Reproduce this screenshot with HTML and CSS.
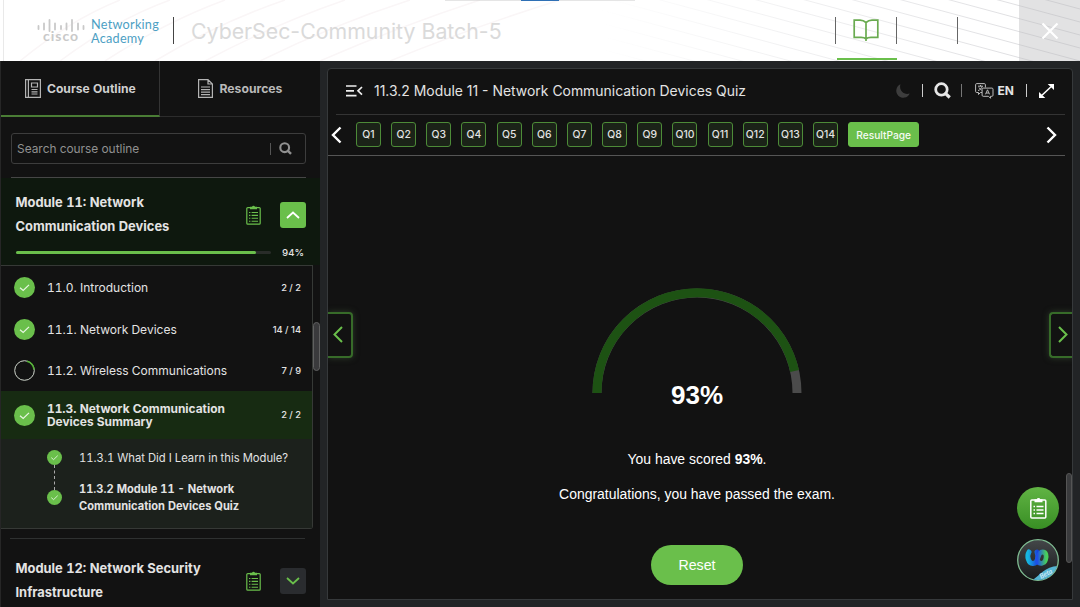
FILE: index.html
```html
<!DOCTYPE html>
<html lang="en">
<head>
<meta charset="UTF-8"><meta name="viewport" content="width=device-width, initial-scale=1">
<title>CyberSec-Community Batch-5</title>
<link rel="stylesheet" href="styles.css">
</head>
<body>
  <!-- shared icons -->
  <svg class="defs" width="0" height="0">
    <symbol id="check" viewBox="0 0 21 21"><circle cx="10.5" cy="10.5" r="10.5" fill="#6abf4b"/><path d="M6 10.7l3.2 2.8 5.8-5.6" fill="none" stroke="#e9f7e3" stroke-width="1.2"/></symbol>
    <symbol id="clip" viewBox="0 0 15 20"><rect x=".8" y="2.6" width="13.4" height="16.6" rx="1" fill="none" stroke="currentColor" stroke-width="1.2"/><path d="M4 1.8h2a1.6 1.6 0 0 1 3 0h2v2.4H4z" fill="currentColor"/><path d="M3 7.5h1.4M5.6 7.5H12M3 10.4h1.4M5.6 10.4H12M3 13.3h1.4M5.6 13.3H12M3 16.2h1.4M5.6 16.2H12" stroke="currentColor" stroke-width="1.1"/></symbol>
    <symbol id="search" viewBox="0 0 16 16"><circle cx="7" cy="7" r="5.4" fill="none" stroke="currentColor" stroke-width="2.6"/><path d="M10 10l4.8 4.6" stroke="currentColor" stroke-width="3"/></symbol>
  </svg>

  <header class="topbar">
    <svg class="waves" width="1080" height="61" fill="none">
      <defs>
        <linearGradient id="fade" gradientUnits="userSpaceOnUse" x1="600" y1="0" x2="1060" y2="0"><stop offset="0" stop-color="#fff"/><stop offset="1" stop-color="#dcdcdf"/></linearGradient>
      </defs>
      <path d="M20 61Q70 20 120 0M60 61Q115 20 170 0M105 61Q165 22 225 0M155 61Q220 22 285 0M205 61Q275 24 345 0M260 61Q335 24 410 0M320 61Q400 26 480 0M390 61Q470 28 560 0" stroke="#faf6f7" stroke-width="1.5"/>
      <path d="M560 -118l520 140M560 -105l520 140M560 -92l520 140M560 -79l520 140M560 -66l520 140M560 -53l520 140M560 -40l520 140M560 -27l520 140M560 -14l520 140M560 -1l520 140M560 12l520 140M560 25l520 140M560 38l520 140M560 -131l520 140" stroke="url(#fade)"/>
      <path d="M3.500 0V61" stroke="#e9e9e9"/>
      <path d="M445 0h190" stroke="#ccc"/>
      <path d="M521 0h38" stroke="#2f70b5" stroke-width="2"/>
    </svg>
    <div class="brand">
      <div class="cisco">
        <svg width="48" height="13" viewBox="0 0 48 13"><path d="M1.500 7v3M7 4.500v6M12.500 1v11M18 4.500v6M24 7v3M29.500 4.500v6M35 1v11M41 4.500v6M46.500 7v3" stroke="#c9c9c9" stroke-width="1.800" stroke-linecap="round"/></svg>
        <span>cisco</span>
      </div>
      <div class="netacad"><span>Networking</span><span>Academy</span></div>
    </div>
    <h1 class="course">CyberSec-Community Batch-5</h1>
    <nav class="topnav">
      <a class="navitem active"><svg width="26" height="23" viewBox="0 0 26 23" fill="none" stroke="#6aab50" stroke-width="1.700"><path d="M13 3.500C11 1.700 9 1.200 7 1.200H1.200v17.200H8c2 0 4 .5 5 1.600 1-1.100 3-1.600 5-1.600h6.800V1.200H19c-2 0-4 .5-6 2.300zM13 3.500V22"/></svg></a>
      <a class="navitem"></a>
      <a class="navitem last"></a>
      <a class="close"><svg width="18" height="18" viewBox="0 0 18 18"><path d="M1.500 1.500l15 15M16.500 1.500l-15 15" stroke="#fff" stroke-width="2.200"/></svg></a>
    </nav>
  </header>

  <div class="layout">
    <aside class="sidebar">
      <div class="tabs">
        <div class="tab selected"><svg width="16" height="19" viewBox="0 0 16 19" fill="none" stroke="#b4b4b4" stroke-width="1.200"><path d="M.6.6h14.800v17.800H.6zM3.400.6v17.800M6.500 4h6v4h-6zM6.500 10.500h6M6.500 12.800h6M6.500 15h6"/></svg><span>Course Outline</span></div>
        <div class="tab"><svg width="15" height="19" viewBox="0 0 15 19" fill="none" stroke="#b4b4b4" stroke-width="1.200"><path d="M.6.6h9.400l4.400 4.400v13.400H.6zM10 .6V5h4.400M3 8h9M3 10.600h9M3 13.200h9M3 15.600h9"/></svg><span>Resources</span></div>
      </div>

      <div class="searchbox"><span>Search course outline</span><i></i><svg width="13" height="13"><use href="#search"/></svg></div>

      <section class="module current">
        <div class="modhead">
          <h2>Module 11: Network<br>Communication Devices</h2>
          <svg class="clip" width="15" height="20"><use href="#clip"/></svg>
          <button class="toggle open"><svg width="14" height="8" viewBox="0 0 14 8"><path d="M1 7l6-5.500L13 7" fill="none" stroke="#fff" stroke-width="1.800"/></svg></button>
        </div>
        <div class="progress"><div class="track"><div class="bar" style="width:94%"></div></div><b>94%</b></div>
      </section>

      <div class="lessons">
        <div class="lesson"><svg width="21" height="21"><use href="#check"/></svg><span>11.0. Introduction</span><em>2 / 2</em></div>
        <div class="lesson"><svg width="21" height="21"><use href="#check"/></svg><span>11.1. Network Devices</span><em>14 / 14</em></div>
        <div class="lesson"><svg width="21" height="21" viewBox="0 0 21 21" fill="none"><circle cx="10.500" cy="10.500" r="9.800" stroke="#cfd6cc"/><path d="M13 1.200a9.600 9.600 0 0 1 7 8.300" stroke="#54b435" stroke-width="1.600"/></svg><span>11.2. Wireless Communications</span><em>7 / 9</em></div>
        <div class="lesson chosen"><svg width="21" height="21"><use href="#check"/></svg><span>11.3. Network Communication<br>Devices Summary</span><em>2 / 2</em></div>
        <div class="topics">
          <div class="steps"><svg width="15" height="15"><use href="#check"/></svg><i></i><svg width="15" height="15"><use href="#check"/></svg></div>
          <div class="topictext">
            <p>11.3.1 What Did I Learn in this Module?</p>
            <p class="now">11.3.2 Module 11 - Network<br>Communication Devices Quiz</p>
          </div>
        </div>
      </div>

      <section class="module next">
        <div class="modhead">
          <h2>Module 12: Network Security<br>Infrastructure</h2>
          <svg class="clip" width="15" height="20"><use href="#clip"/></svg>
          <button class="toggle"><svg width="14" height="8" viewBox="0 0 14 8"><path d="M1 1l6 5.500L13 1" fill="none" stroke="#6abf4b" stroke-width="1.800"/></svg></button>
        </div>
      </section>
      <div class="thumb"></div>
    </aside>

    <main class="panel">
      <div class="titlebar">
        <svg width="17" height="12" viewBox="0 0 17 12"><path d="M0 1h10.500M0 5.800h8M0 10.600h10.500M16 2l-4 3.800 4 3.800" fill="none" stroke="#eee" stroke-width="1.700"/></svg>
        <h3>11.3.2 Module 11 - Network Communication Devices Quiz</h3>
        <div class="tools">
          <svg class="moon" width="14" height="14" viewBox="0 0 14 14"><path d="M4.500.3A7 7 0 1 0 13.700 9.500C8 11.500 2.500 6.500 4.500.3z" fill="#3d3d3d"/></svg>
          <i></i>
          <svg class="find" width="17" height="17"><use href="#search"/></svg>
          <i class="dim"></i>
          <svg class="lang" width="19" height="16" viewBox="0 0 19 16" fill="none" stroke="#bbb"><path d="M7 9.500H5.500L3.500 11.500V9.500H1.700Q.6 9.500.6 8.400V1.700Q.6.6 1.700.6h7.600q1.100 0 1.100 1.100V4.500M3 3.200h5M5.500 2v1.200M7.200 3.200C6.500 5.500 5 7 3 7.600M4 4.500c.6 1.200 1.500 2 2.600 2.600"/><path d="M8.200 5.100h8.700q1.100 0 1.100 1.100v6q0 1.100-1.100 1.100H15.500v2l-2-2H8.200q-1.100 0-1.100-1.100v-6q0-1.100 1.100-1.100zM10.500 11.300l2-4.500 2 4.500M11.200 10h2.600"/></svg>
          <b>EN</b>
          <i></i>
          <svg class="expand" width="15" height="14" viewBox="0 0 15 14"><path d="M3 11.200L12 2.800" stroke="#fff" stroke-width="1.500"/><path d="M8.700 0H15v6zM0 14V8l6.300 6z" fill="#fff"/></svg>
        </div>
      </div>

      <div class="questions">
        <svg class="prev" width="11" height="18" viewBox="0 0 11 18"><path d="M9.500 1.500L2 9l7.500 7.500" fill="none" stroke="#fff" stroke-width="2.400"/></svg>
        <div class="qlist">
          <a>Q1</a><a>Q2</a><a>Q3</a><a>Q4</a><a>Q5</a><a>Q6</a><a>Q7</a><a>Q8</a><a>Q9</a><a>Q10</a><a>Q11</a><a>Q12</a><a>Q13</a><a>Q14</a><a class="result">ResultPage</a>
        </div>
        <svg class="fwd" width="11" height="18" viewBox="0 0 11 18"><path d="M1.500 1.500L9 9l-7.500 7.500" fill="none" stroke="#fff" stroke-width="2.400"/></svg>
      </div>

      <div class="score">
        <svg width="210" height="106" viewBox="0 0 210 106" fill="none" stroke-width="9"><path d="M5 105a100 100 0 0 1 200 0" stroke="#4b4b4b"/><path d="M5 105a100 100 0 0 1 197.600-21.900" stroke="#1d5213"/></svg>
        <div class="pct">93%</div>
        <p class="line1">You have scored <b>93%</b>.</p>
        <p class="line2">Congratulations, you have passed the exam.</p>
        <button class="reset">Reset</button>
      </div>

      <div class="side left"><svg width="10" height="17" viewBox="0 0 10 17"><path d="M9 1L1.500 8.500 9 16" fill="none" stroke="#6abf4b" stroke-width="2"/></svg></div>
      <div class="side right"><svg width="10" height="17" viewBox="0 0 10 17"><path d="M1 1l7.500 7.500L1 16" fill="none" stroke="#6abf4b" stroke-width="2"/></svg></div>
      <div class="fab notes"><svg width="17" height="22" viewBox="0 0 17 22" fill="none" stroke="#fff"><rect x=".8" y="3" width="15" height="18" rx="1" stroke-width="1.500"/><path d="M4.500 2.200h2.200a1.900 1.900 0 0 1 3.600 0h2.200v3h-8z" fill="#fff" stroke="none"/><path d="M3.500 9.500H5M6.500 9.500h7M3.500 13H5M6.500 13h7M3.500 16.500H5M6.500 16.500h7" stroke-width="1.400"/></svg></div>
      <div class="fab bot">
        <svg width="42" height="42" viewBox="0 0 42 42">
          <defs>
            <linearGradient id="disc" x1="0" y1="0" x2="0" y2="1"><stop offset="0" stop-color="#444749"/><stop offset="1" stop-color="#17191b"/></linearGradient>
            <linearGradient id="loopA"><stop offset="0" stop-color="#16b6e0"/><stop offset="1" stop-color="#1741dc"/></linearGradient>
            <linearGradient id="loopB"><stop offset="0" stop-color="#1e50e8"/><stop offset="1" stop-color="#49cf5b"/></linearGradient>
            <clipPath id="round"><circle cx="21" cy="21" r="20"/></clipPath>
          </defs>
          <circle cx="21" cy="21" r="20.300" fill="url(#disc)" stroke="#80bd93" stroke-width="1.300"/>
          <path d="M12 13c-2.500 4-.5 11.800 4 11.500 5-.3 5.500-7 4-11.500" fill="none" stroke="url(#loopA)" stroke-width="5" stroke-linecap="round"/>
          <path d="M20.500 22c2 3.500 6.500 3 8-1 1.500-4 .5-8-3-8-3 0-4 3-5 7" fill="none" stroke="url(#loopB)" stroke-width="4.800" stroke-linecap="round"/>
          <path clip-path="url(#round)" d="M14 42C22 38 27 27 42 27v15z" fill="#55b6d4"/>
          <text x="24" y="40" transform="rotate(-27 24 40)" font-family="Lato,sans-serif" font-style="italic" font-size="7" fill="#e3f4fa">Beta</text>
        </svg>
      </div>
      <div class="thumb2"></div>
    </main>
  </div>
</body>
</html>
```
FILE: styles.css
```css
*{box-sizing:border-box}
body{margin:0;width:1080px;height:607px;overflow:hidden;background:#222426;color:#e3e3e3;font-family:Inter,"Liberation Sans",sans-serif;display:flex;flex-direction:column}
h1,h2,h3,p{margin:0}
svg{display:block;flex:none}
button{border:0;padding:0;display:flex;align-items:center;justify-content:center}
.defs{position:absolute}

/* top bar */
.topbar{position:relative;height:61px;flex:none;background:#fff;display:flex;align-items:center}
.waves{position:absolute;left:0;top:0}
.brand{position:relative;display:flex;align-items:center;width:174px;height:27px;padding-left:37px;border-right:1px solid #444;gap:6px}
.cisco{width:48px;text-align:center;color:#c9c9c9;font:bold 14px/12px Lato,sans-serif;letter-spacing:1px}
.cisco span{display:block;font-size:14px;margin-top:-2px}
.netacad{font:12.700px/14px Lato,"Open Sans",sans-serif;letter-spacing:.25px;color:#4d9fc4}
.netacad span{display:block;height:14px}
.course{position:relative;margin-left:17px;font-size:21.300px;font-weight:400;color:#dadada;white-space:nowrap}
.topnav{position:relative;margin-left:auto;display:flex;align-items:center;height:61px}
.navitem{width:61px;height:27px;border-left:1px solid #666;display:flex;align-items:center;justify-content:center;position:relative}
.navitem.last{width:62px}
.navitem.active::after{content:"";position:absolute;left:1px;right:-1px;top:41px;height:2px;background:#6abf4b}
.close{width:61px;height:61px;background:rgba(190,190,194,.45);display:flex;align-items:center;justify-content:center}

.layout{flex:1;display:flex;min-height:0}

/* sidebar */
.sidebar{position:relative;width:320px;height:546px;overflow:hidden;background:#121212;border-left:1px solid #262626;flex:none;font-variant-numeric:tabular-nums}
.tabs{display:flex;height:56px;border-bottom:1px solid #2c2c2c}
.tab{width:160px;height:56px;padding-left:38px;padding-bottom:1px;display:flex;align-items:center;gap:6px;font-size:12.200px;font-weight:700;color:#b9b9b9}
.tab.selected{padding-left:24px;padding-bottom:0;border-right:1px solid #343434;border-bottom:2px solid #4a7d35;color:#cfcfcf;font-size:12.100px}
.searchbox{height:31px;margin:16px 14px 0 10px;border:1px solid #3d3d3d;border-radius:3px;display:flex;align-items:center;padding:0 13px 0 5px;color:#909090;font-size:11.900px}
.searchbox span{flex:1}
.searchbox i{width:1px;height:12px;background:#555;margin-right:8px}
.module h2{font-size:12.900px;line-height:24px;font-weight:700;flex:1;white-space:nowrap}
.modhead{display:flex;align-items:center;padding:0 14px 0 14.500px}
.clip{color:#6abf4b;margin-right:19px}
.toggle{width:26px;height:26px;border-radius:3px;background:#2a2c2f}
.toggle.open{background:#6abf4b}
.current{position:relative;height:87px;margin-top:14px;padding-top:13px;background:#0e180e}
.current::before,.next::before{content:"";display:block;height:1px;background:#464646;margin:-14px 14px 13px 10px}
.progress{display:flex;align-items:center;padding:8px 16px 0 15px;justify-content:space-between;font-size:9.600px}
.progress b{font-weight:500}
.track{width:255px;height:3px;border-radius:2px;background:#292c29}
.bar{height:3px;border-radius:2px;background:#6abf4b}
.lessons{width:312px;height:264px;border:1px solid #363936;border-left:0;border-radius:0 0 3px 0}
.lesson{position:relative;top:.5px;height:41.700px;display:flex;align-items:center;padding:0 11px 0 13px;gap:12px;font-size:12px}
.lesson span{flex:1;white-space:nowrap}
.lesson em{font-style:normal;font-size:9.300px;font-weight:500;font-variant-numeric:normal}
.chosen{top:0;height:48px;background:#172b12;font-weight:700;font-size:11.900px;line-height:13.500px}
.topics{display:flex;height:89px;background:#1c211c;padding:11px 0 0 46px;gap:17px;font-size:11.250px}
.steps{width:15px}
.steps i{display:block;height:25px;width:0;margin-left:7px;border-left:1px dashed #aaa}
.topictext p{line-height:16px;white-space:nowrap}
.topictext .now{margin-top:15px;font-weight:700;font-size:11.100px;line-height:16.500px}
.next{margin-top:9px;padding-top:19px}
.next::before{margin:-19px 15px 18px 9px;background:#2e3030}
.thumb{position:absolute;right:0;top:261px;width:7px;height:49px;border:1px solid #606060;border-radius:4px;background:#3a3a3c}

/* quiz panel */
.panel{position:relative;width:746px;height:532px;margin:7px 0 0 7px;background:#121212;border:1px solid #36393b;border-radius:4px 4px 0 0;overflow:hidden}
.titlebar{height:46px;margin:0 7px 0 8px;border-bottom:1px solid #343434;display:flex;align-items:center;padding:0 0 2px 10px}
.titlebar h3{font-size:13.950px;font-weight:400;margin-left:11px;white-space:nowrap}
.tools{margin-left:auto;display:flex;align-items:center;padding-right:11px}
.tools i{width:1px;height:13px;background:#ccc}
.tools .dim{background:#777}
.tools b{font-size:12px;margin-right:12px}
.moon{margin-right:12px}
.find{color:#e6e6e6;margin:0 10px 0 11px}
.lang{margin:0 4px 0 13px}
.expand{margin-left:12px}
.questions{height:41px;margin-right:7px;border-bottom:1px solid #555;display:flex;align-items:center;padding:0 8px 1px 3px}
.qlist{display:flex;gap:10.170px;margin-left:14px}
.qlist a{width:25px;height:25px;border:1px solid #4d8b38;border-radius:3px;background:#1b2318;font-size:10.400px;font-weight:500;display:flex;align-items:center;justify-content:center}
.qlist .result{width:71px;background:#6abf4b;border-color:#6abf4b;color:#f5fbf2;font-size:10.200px}
.fwd{margin-left:auto}
.score{display:flex;flex-direction:column;align-items:center;padding:132px 6px 0 0;font-family:"Liberation Sans",Arial,sans-serif;font-size:13.950px;color:#fff}
.pct{font-size:26px;line-height:30px;font-weight:700;margin-top:-14px}
.line1{line-height:18px;margin-top:40px}
.line2{line-height:18px;margin-top:17px}
.reset{width:92px;height:40px;margin-top:42px;border-radius:20px;background:#6abf4b;color:#fff;font:14.200px "Liberation Sans",Arial,sans-serif}

/* floating controls */
.side{position:absolute;top:243px;width:25px;height:46px;border:2px solid #376b29;background:#121212;display:flex;align-items:center;justify-content:center;box-shadow:0 0 6px #2d3a29}
.side svg{margin-top:-2px}
.left{left:0;border-left:0;border-radius:0 4px 4px 0}
.left svg{margin-left:-3px}
.right{right:-2px;border-right:0;border-radius:4px 0 0 4px}
.fab{position:absolute;left:689px;width:42px;height:42px;border-radius:50%;display:flex;align-items:center;justify-content:center}
.notes{top:418px;background:linear-gradient(#61b444,#388e24);color:#fff}
.bot{top:470px}
.thumb2{position:absolute;right:0;top:404px;width:6px;height:90px;border:1px solid #555;border-radius:3px;background:#3a3b3d}
```
